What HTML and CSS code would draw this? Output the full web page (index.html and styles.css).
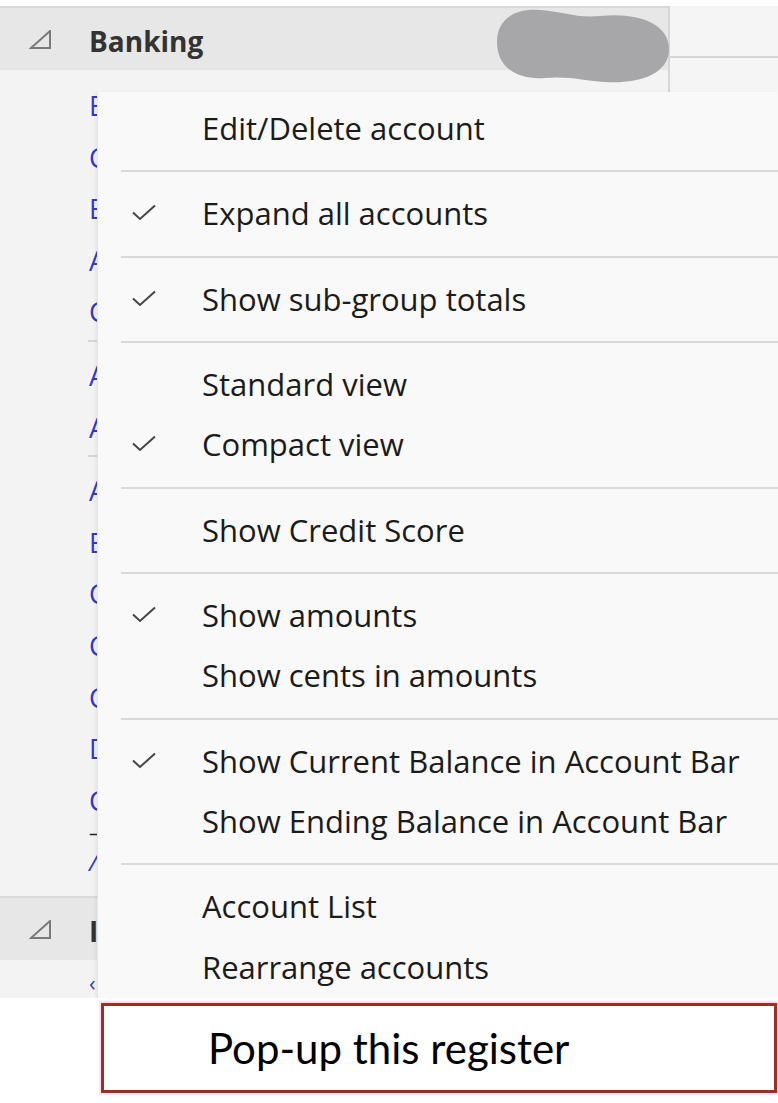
FILE: index.html
```html
<!DOCTYPE html>
<html>
<head>
<meta charset="utf-8">
<link rel="stylesheet" href="styles.css">
</head>
<body>
<div class="screen">
  <div class="main-col">
    <div class="group-header">
      <svg class="twisty" width="24" height="20" viewBox="0 0 24 20"><path d="M2 18 L21 18 L21 1 Z" fill="none" stroke="#7a7a7a" stroke-width="2" stroke-linejoin="miter"/></svg>
      <span class="group-name">Banking</span>
      <svg class="blob" width="175" height="82" viewBox="0 0 175 82"><path d="M2 38 C2 15 20 4 45 6 C70 8 80 14 105 12 C140 8 174 18 174 45 C174 72 140 80 110 78 C85 76 75 72 50 74 C20 76 2 62 2 38 Z" fill="#a7a7a9"/></svg>
    </div>
    <ul class="accounts">
      <li>E</li><li>C</li><li>E</li><li>A</li><li>C</li>
      <li class="divider"></li>
      <li>A</li><li>A</li>
      <li class="divider"></li>
      <li>A</li><li>E</li><li>C</li><li>C</li><li>C</li><li>D</li><li>C</li>
      <li class="total">–</li>
      <li class="link">/</li>
    </ul>
    <div class="group-header second">
      <svg class="twisty" width="24" height="20" viewBox="0 0 24 20"><path d="M2 18 L21 18 L21 1 Z" fill="none" stroke="#7a7a7a" stroke-width="2"/></svg>
      <span class="group-name">I</span>
    </div>
    <ul class="accounts after">
      <li>‹</li>
    </ul>
  </div>
  <div class="side-col">
    <div class="side-top"></div>
  </div>

  <div class="menu">
    <div class="item"><span class="mark"></span><span class="label">Edit/Delete account</span></div>
    <div class="sep"></div>
    <div class="item"><span class="mark"><svg width="24" height="18" viewBox="0 0 24 18"><path d="M1 8.5 L8 15 L23 1.5" fill="none" stroke="#454545" stroke-width="2"/></svg></span><span class="label">Expand all accounts</span></div>
    <div class="sep"></div>
    <div class="item"><span class="mark"><svg width="24" height="18" viewBox="0 0 24 18"><path d="M1 8.5 L8 15 L23 1.5" fill="none" stroke="#454545" stroke-width="2"/></svg></span><span class="label">Show sub-group totals</span></div>
    <div class="sep"></div>
    <div class="item"><span class="mark"></span><span class="label">Standard view</span></div>
    <div class="item"><span class="mark"><svg width="24" height="18" viewBox="0 0 24 18"><path d="M1 8.5 L8 15 L23 1.5" fill="none" stroke="#454545" stroke-width="2"/></svg></span><span class="label">Compact view</span></div>
    <div class="sep"></div>
    <div class="item"><span class="mark"></span><span class="label">Show Credit Score</span></div>
    <div class="sep"></div>
    <div class="item"><span class="mark"><svg width="24" height="18" viewBox="0 0 24 18"><path d="M1 8.5 L8 15 L23 1.5" fill="none" stroke="#454545" stroke-width="2"/></svg></span><span class="label">Show amounts</span></div>
    <div class="item"><span class="mark"></span><span class="label">Show cents in amounts</span></div>
    <div class="sep"></div>
    <div class="item"><span class="mark"><svg width="24" height="18" viewBox="0 0 24 18"><path d="M1 8.5 L8 15 L23 1.5" fill="none" stroke="#454545" stroke-width="2"/></svg></span><span class="label">Show Current Balance in Account Bar</span></div>
    <div class="item"><span class="mark"></span><span class="label">Show Ending Balance in Account Bar</span></div>
    <div class="sep"></div>
    <div class="item"><span class="mark"></span><span class="label">Account List</span></div>
    <div class="item"><span class="mark"></span><span class="label">Rearrange accounts</span></div>
  </div>
</div>
<div class="callout">Pop-up this register</div>
</body>
</html>
```
FILE: styles.css
```css
* { box-sizing: border-box; }
html, body { margin: 0; padding: 0; background: #ffffff; }
body { width: 778px; height: 1103px; overflow: hidden; font-family: "Open Sans", "Noto Sans", sans-serif; }

.screen {
  position: relative;
  height: 998px;
  overflow: hidden;
  padding-top: 6px;
  background: linear-gradient(#ffffff 0 6px, #f3f3f3 6px);
  display: grid;
  grid-template-columns: 668px 110px;
  align-items: start;
}

.main-col { border-top: 2px solid #d9d9d9; }

.group-header {
  position: relative;
  height: 62px;
  background: #e7e7e7;
  display: flex;
  align-items: center;
}
.group-header.second { height: 64px; margin-top: 12px; border-top: 2px solid #d9d9d9; }
.twisty { margin-left: 29px; margin-top: 2px; flex: none; }
.group-name {
  margin-left: 36px;
  margin-top: 3px;
  font-size: 28px;
  font-weight: 700;
  color: #333333;
}
.blob { position: absolute; left: 495px; top: -4px; }

.accounts {
  list-style: none;
  margin: 0;
  padding: 10px 0 0 89px;
}
.accounts li {
  height: 51.6px;
  line-height: 51.6px;
  font-size: 27px;
  color: #3636cc;
}
.accounts li.divider { height: 2px; margin: 2px 0 8px -1px; background: #d6d6d6; }
.accounts li.total { height: 14px; line-height: 14px; font-size: 20px; color: #222; }
.accounts li.link { height: 44px; line-height: 44px; font-size: 24px; font-style: italic; }
.accounts.after { padding-top: 10px; }
.accounts.after li { height: 24px; line-height: 24px; font-size: 22px; }

.side-col {
  height: 86px;
  border-left: 2px solid #d6d6d6;
  background: #f5f5f5;
}
.side-top { height: 52px; border-bottom: 2px solid #d6d6d6; }

.menu {
  position: absolute;
  left: 97px;
  top: 92px;
  right: 0;
  bottom: 0;
  padding-top: 6px;
  background: #f9f9f9;
  border-left: 1px solid #e6e6e6;
  box-shadow: -2px 0 3px rgba(0,0,0,0.05);
}
.item {
  height: 60.33px;
  display: flex;
  align-items: center;
}
.mark {
  width: 104px;
  flex: none;
  display: flex;
  align-items: center;
  padding-left: 34px;
}
.label {
  font-size: 31px;
  color: #1b1b1b;
  white-space: nowrap;
}
.sep { height: 2px; margin: 12px 0 11px 23px; background: #d9d9d9; }

.callout {
  margin: 5px 0 0 101px;
  width: 676px;
  height: 90px;
  border: 3px solid #a22d1d;
  box-shadow: 0 0 0 2px #ffe0ff;
  background: #ffffff;
  display: flex;
  align-items: center;
  padding-left: 104px;
  font-family: "Lato", "Open Sans", sans-serif;
  font-size: 42px;
  color: #000000;
}
```
